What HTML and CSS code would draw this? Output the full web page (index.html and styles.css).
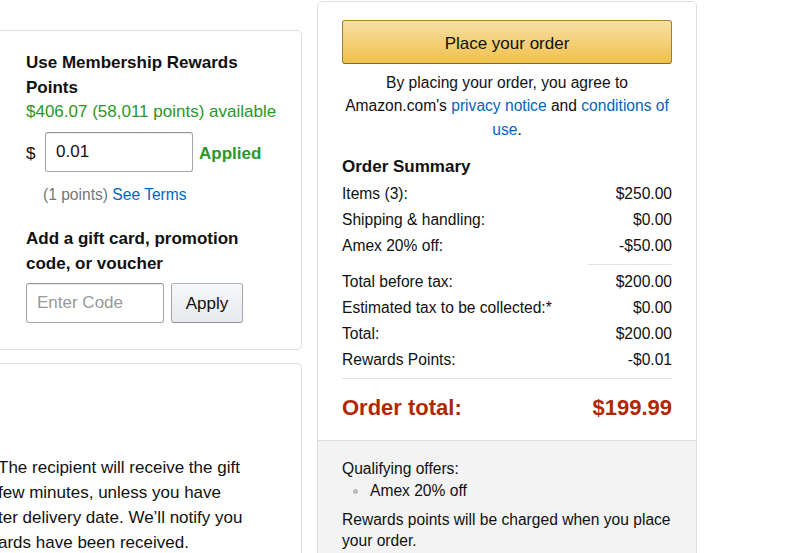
FILE: index.html
```html
<!DOCTYPE html>
<html>
<head>
<meta charset="utf-8">
<link rel="stylesheet" href="styles.css">
</head>
<body>
<div class="page">
  <div class="left-col">
    <div class="card card-rewards">
      <h3 class="box-title">Use Membership Rewards Points</h3>
      <div class="available">$406.07 (58,011 points) available</div>
      <div class="points-row">
        <span class="dollar">$</span>
        <input class="text-input points-input" type="text" value="0.01">
        <span class="applied">Applied</span>
      </div>
      <div class="points-note">(1 points) <a class="link" href="#">See Terms</a></div>
      <h3 class="box-title gift-title">Add a gift card, promotion code, or voucher</h3>
      <div class="code-row">
        <input class="text-input code-input" type="text" placeholder="Enter Code">
        <button class="apply-btn">Apply</button>
      </div>
    </div>
    <div class="card card-gift">
      <p class="gift-text">The recipient will receive the gift<br>few minutes, unless you have<br>ter delivery date. We’ll notify you<br>ards have been received.</p>
    </div>
  </div>
  <div class="right-col">
    <div class="summary-card">
      <div class="summary-top">
        <button class="place-btn">Place your order</button>
        <p class="agree">By placing your order, you agree to Amazon.com's <a class="link" href="#">privacy notice</a> and <a class="link" href="#">conditions of use</a>.</p>
        <h3 class="summary-title">Order Summary</h3>
        <div class="row"><span>Items (3):</span><span>$250.00</span></div>
        <div class="row"><span>Shipping &amp; handling:</span><span>$0.00</span></div>
        <div class="row"><span>Amex 20% off:</span><span>-$50.00</span></div>
        <div class="sep-short"></div>
        <div class="row"><span>Total before tax:</span><span>$200.00</span></div>
        <div class="row"><span>Estimated tax to be collected:*</span><span>$0.00</span></div>
        <div class="row"><span>Total:</span><span>$200.00</span></div>
        <div class="row"><span>Rewards Points:</span><span>-$0.01</span></div>
        <div class="sep-full"></div>
        <div class="total-row"><span>Order total:</span><span>$199.99</span></div>
      </div>
      <div class="summary-bottom">
        <div class="offers-label">Qualifying offers:</div>
        <ul class="offers">
          <li>Amex 20% off</li>
        </ul>
        <p class="charge-note">Rewards points will be charged when you place your order.</p>
      </div>
    </div>
  </div>
</div>
</body>
</html>
```

FILE: styles.css
```css
html, body {
  margin: 0;
  padding: 0;
  background: #fff;
  overflow: hidden;
}
body {
  width: 800px;
  height: 553px;
  font-family: "Liberation Sans", Arial, sans-serif;
  color: #111;
}
.page {
  display: flex;
  align-items: flex-start;
  gap: 15px;
}
.left-col {
  margin-left: -20px;
  width: 322px;
  flex: none;
  display: flex;
  flex-direction: column;
  gap: 13px;
  padding-top: 30px;
}
.card {
  border: 1px solid #dddddd;
  border-radius: 5px;
  background: #fff;
}
.card-rewards {
  padding: 20px 22px 27px 45px;
  height: 320px;
  box-sizing: border-box;
}
.box-title {
  margin: 0;
  font-size: 17px;
  font-weight: bold;
  line-height: 24.5px;
  color: #111;
}
.available {
  color: #2a972a;
  font-size: 17px;
  line-height: 24px;
}
.points-row {
  display: flex;
  align-items: center;
  margin-top: 8px;
  font-size: 17px;
}
.dollar {
  width: 19px;
  padding-top: 3px;
}
.text-input {
  height: 40px;
  box-sizing: border-box;
  border: 1px solid #a6a6a6;
  border-top-color: #949494;
  border-radius: 3px;
  box-shadow: 0 1px 0 rgba(255,255,255,.5), 0 1px 0 rgba(0,0,0,.07) inset;
  font-family: "Liberation Sans", Arial, sans-serif;
  font-size: 17px;
  color: #111;
  padding: 0 10px;
  outline: none;
}
.text-input::placeholder {
  color: #999;
}
.points-input {
  width: 148px;
}
.applied {
  margin-left: 6px;
  color: #2a972a;
  font-weight: bold;
  padding-top: 3px;
}
.points-note {
  margin-top: 12px;
  padding-left: 17px;
  font-size: 15.6px;
  line-height: 22px;
  color: #767676;
}
.link {
  color: #0066c0;
  text-decoration: none;
}
.gift-title {
  margin-top: 20px;
  line-height: 25px;
}
.code-row {
  display: flex;
  gap: 7px;
  margin-top: 7px;
}
.code-input {
  width: 138px;
}
.apply-btn {
  width: 72px;
  height: 40px;
  border: 1px solid #adb1b8;
  border-color: #adb1b8 #a2a6ac #8d9096;
  border-radius: 3px;
  background: linear-gradient(to bottom, #f7f8fa, #e7e9ec);
  font-family: "Liberation Sans", Arial, sans-serif;
  font-size: 17px;
  color: #111;
  padding: 2px 0 0;
}
.card-gift {
  padding: 91px 22px 40px 45px;
  min-height: 200px;
  border-bottom: none;
}
.gift-text {
  margin: 0 0 0 -28px;
  font-size: 17px;
  line-height: 25px;
  color: #111;
}
.right-col {
  width: 380px;
  flex: none;
  padding-top: 1px;
}
.summary-card {
  border: 1px solid #dddddd;
  border-radius: 5px;
  overflow: hidden;
  min-height: 600px;
  background: #f3f3f3;
}
.summary-top {
  background: #fff;
  padding: 18px 24px 17px 24px;
  border-bottom: 1px solid #dddddd;
}
.place-btn {
  display: block;
  width: 100%;
  height: 44px;
  border: 1px solid;
  border-color: #a88734 #9c7e31 #846a29;
  border-radius: 3px;
  background: linear-gradient(to bottom, #f7dfa5, #f0c14b);
  font-family: "Liberation Sans", Arial, sans-serif;
  font-size: 17px;
  color: #111;
  padding: 3px 0 0;
}
.agree {
  margin: 7px 0 0;
  text-align: center;
  font-size: 15.6px;
  line-height: 23.3px;
}
.summary-title {
  margin: 13px 0 1px;
  font-size: 17px;
  font-weight: bold;
  line-height: 26px;
}
.row {
  display: flex;
  justify-content: space-between;
  font-size: 15.6px;
  line-height: 26px;
}
.sep-short {
  height: 1px;
  background: #e3e3e3;
  margin: 5px 0 4px auto;
  width: 84px;
}
.sep-full {
  height: 1px;
  background: #e3e3e3;
  margin: 5px 0 14px;
}
.total-row {
  display: flex;
  justify-content: space-between;
  font-size: 22px;
  font-weight: bold;
  line-height: 30px;
  color: #b12704;
}
.summary-bottom {
  padding: 17px 24px 20px;
  font-size: 15.6px;
  line-height: 22px;
}
.offers {
  margin: 0;
  padding-left: 28px;
  list-style: none;
}
.offers li {
  position: relative;
}
.offers li::before {
  content: "";
  position: absolute;
  left: -17px;
  top: 9px;
  width: 5px;
  height: 5px;
  border-radius: 50%;
  background: #bbbbbb;
}
.charge-note {
  margin: 7px 0 0;
  line-height: 21.5px;
}
```
